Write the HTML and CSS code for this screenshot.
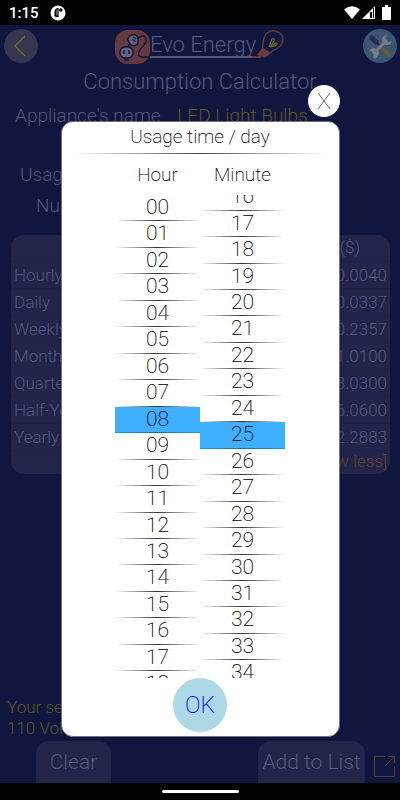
FILE: index.html
```html
<!DOCTYPE html>
<html lang="en">
<head>
	<meta charset="utf-8">
	<title>Evo Energy</title>
	<meta name="viewport" content="width=device-width, initial-scale=1">
	<link rel="stylesheet" href="styles.css">
</head>
<body>
	<div class="status">
		<span class="clock">1:15</span>
		<svg width="16" height="16" viewBox="0 0 16 16">
			<circle cx="8" cy="8" r="7.5" fill="#fff"/>
			<path d="M8.6 3H7.5Q4.5 3.5 4.5 7v3.5Q5 12 7 12h1.6z" fill="#000"/>
			<path d="M7 4.5v6" stroke="#fff" stroke-width=".7"/>
			<circle cx="10.8" cy="5" r="1.7" fill="#000"/>
		</svg>
		<svg class="signals" width="48" height="16" viewBox="0 0 48 16">
			<path d="M0 4.5Q8-2 16 4.5L8 14z" fill="#fff"/>
			<path d="M31 1v13H18z" fill="#fff"/>
			<path d="M26 7h2v6h-2zM29 3h1v10h-1z" fill="#000"/>
			<path d="M38 2h3V0h3v2h3v13h-9z" fill="#fff"/>
		</svg>
	</div>

	<main class="app">
		<header class="header">
			<button class="round back" aria-label="Back">
				<svg width="34" height="34" viewBox="0 0 34 34"><path d="M21 7L11 17l10 10" fill="none" stroke="#6b6729" stroke-width="1.5"/></svg>
			</button>
			<div class="logo">
				<svg width="35" height="36" viewBox="0 0 35 36">
					<rect x="0" y="1" width="35" height="34" rx="13" fill="#64393f"/>
					<g fill="#65647b" stroke="#11163e" stroke-width="1.5">
						<path d="M13 11q0-4 4-5 5-1 6 3 1 6-2 7-3 2-6-1z"/>
						<rect x="5" y="18" width="13" height="11" rx="5"/>
					</g>
					<path d="M17 10l4 3M18 8l3 2M9 21v4M14 21v4M10 29v2h4M13 17l3-2M23 10c6-7 11 0 6 6-5 5-9 12-1 12h7" fill="none" stroke="#11163e" stroke-width="1.4"/>
				</svg>
				<span class="brand">Evo Energy</span>
				<svg class="bulb" width="34" height="32" viewBox="0 0 34 32" fill="none">
					<path d="M11 20C10 8 15 1 22 2c10 1 12 11 4 17-3 2-6 2-8 5z" stroke="#64393f" stroke-width="1.5"/>
					<path d="M10 19l8 6-5 4-8-3z" fill="#64393f"/>
					<path d="M0 28h9" stroke="#64393f" stroke-width="2"/>
					<path d="M17 18l3-8q3-1 2 2l-4 6 6-4q3 0-1 3l-5 1" stroke="#68642e" stroke-width="1.3"/>
				</svg>
			</div>
			<button class="round tools" aria-label="Settings">
				<svg width="34" height="34" viewBox="0 0 34 34" fill="none">
					<path d="M8 8l10 10" stroke="#242b4c" stroke-width="2"/>
					<path d="M9 9l4 4" stroke="#242b4c" stroke-width="5" stroke-linecap="round"/>
					<path d="M20 20l6 6" stroke="#6a573f" stroke-width="4" stroke-linecap="round"/>
					<path d="M10 25L24 11" stroke="#777b8c" stroke-width="3"/>
					<path d="M24 6a5 5 0 1 0 5 6l-4 1-3-3zM6 23a5 5 0 1 1 4 6l1-4-3-3z" fill="#777b8c"/>
				</svg>
			</button>
		</header>
		<h1 class="title">Consumption Calculator</h1>
		<div class="fields">
			<p class="appliance">Appliance's name <span class="value">LED Light Bulbs</span></p>
			<p class="usage">Usage time</p>
			<p class="number">Number</p>
		</div>

		<div class="card">
			<table class="costs">
				<thead>
					<tr><th></th><th>($)</th></tr>
				</thead>
				<tbody>
					<tr><td>Hourly</td><td>0.0040</td></tr>
					<tr><td>Daily</td><td>0.0337</td></tr>
					<tr><td>Weekly</td><td>0.2357</td></tr>
					<tr><td>Monthly</td><td>1.0100</td></tr>
					<tr><td>Quarterly</td><td>3.0300</td></tr>
					<tr><td>Half-Yearly</td><td>6.0600</td></tr>
					<tr><td>Yearly</td><td>12.2883</td></tr>
				</tbody>
			</table>
			<a class="less" href="#">[show less]</a>
		</div>

		<p class="selection">Your selection<br>110 Volt currency</p>
		<footer class="actions">
			<button class="tab clear">Clear</button>
			<button class="tab add">Add to List</button>
			<button class="export" aria-label="Export">
				<svg width="23" height="23" viewBox="0 0 23 23"><path d="M12 1.5H1.5v20h20V11M12 11l9.5-9.5M15 1.5h6.5V8" fill="none" stroke="#573c38"/></svg>
			</button>
		</footer>
	</main>
	<div class="navbar"><span class="pill"></span></div>

	<section class="dialog" role="dialog" aria-labelledby="dialog-title">
		<button class="close" aria-label="Close">
			<svg width="14" height="18" viewBox="0 0 14 18"><path d="M1 1l12 16M13 1L1 17" stroke="#666" stroke-width="1"/></svg>
		</button>
		<h2 id="dialog-title">Usage time / day</h2>
		<div class="divider"></div>
		<div class="columns">
			<h3 id="hour-label">Hour</h3>
			<h3 id="minute-label">Minute</h3>
			<div class="wheel" id="hours" role="radiogroup" aria-labelledby="hour-label"><div class="rows hours"></div></div>
			<div class="wheel" id="minutes" role="radiogroup" aria-labelledby="minute-label"><div class="rows minutes"></div></div>
		</div>
		<button class="ok">OK</button>
	</section>
	<script src="script.js"></script>
</body>
</html>
```

FILE: styles.css
```css
* {
	box-sizing: border-box;
}
body {
	margin: 0;
	min-height: 100vh;
	display: flex;
	flex-direction: column;
	position: relative;
	background: #11163e;
	color: #56587a;
	font-family: Roboto, "Liberation Sans", sans-serif;
	font-weight: 300;
}
h1, h2, h3, p {
	margin: 0;
	font-weight: 300;
}
button {
	border: none;
	padding: 0;
	font: inherit;
	color: inherit;
	background: none;
	cursor: pointer;
}
svg {
	display: block;
}

/* system bars */
.status {
	height: 25px;
	display: flex;
	align-items: center;
	gap: 11px;
	padding: 0 8px 0 9px;
	background: #000;
	color: #fff;
}
.clock {
	font-size: 15px;
	font-weight: 500;
}
.signals {
	margin-left: auto;
}
.navbar {
	height: 17px;
	display: flex;
	justify-content: center;
	align-items: center;
	background: #000;
}
.pill {
	width: 77px;
	height: 3px;
	border-radius: 2px;
	background: #fff;
}

/* main screen */
.app {
	flex: 1;
	display: flex;
	flex-direction: column;
}
.header {
	display: flex;
	justify-content: space-between;
	padding: 4px 3px 0 4px;
	height: 44px;
}
.round {
	width: 34px;
	height: 34px;
	border-radius: 50%;
}
.back {
	background: #35364f;
}
.tools {
	background: #3b5470;
}
.logo {
	display: flex;
	height: 36px;
}
.brand {
	height: 29px;
	border-bottom: 2px solid #56587a;
	font-size: 22px;
	line-height: 31px;
}
.bulb {
	margin-left: -4px;
}
.title {
	font-size: 22px;
	line-height: 26px;
	text-align: center;
}
.fields {
	display: flex;
	flex-direction: column;
	padding: 9px 15px 0;
	font-size: 19px;
	line-height: 24px;
}
.value {
	margin-left: 12px;
	color: #5c5a22;
}
.usage {
	padding: 35px 0 7px 5px;
}
.number {
	padding-left: 21px;
}
.card {
	margin: 17px 10px 0 11px;
	border-radius: 13px;
	background: #222449;
	text-align: right;
	font-size: 17px;
	line-height: 26px;
}
.costs {
	width: 100%;
	border-collapse: collapse;
}
.costs th, .costs td {
	height: 27px;
	padding: 0 3px;
	border-bottom: 1px solid #1f2145;
	font-weight: 300;
	text-align: right;
}
.costs th {
	height: 26px;
	padding-right: 30px;
	line-height: 25px;
}
.costs td:first-child {
	text-align: left;
}
.less {
	display: block;
	padding: 0 3px 2px;
	line-height: 21px;
	color: #62402f;
	text-decoration: none;
}
.selection {
	margin-top: auto;
	padding: 0 7px 2px;
	font-size: 17px;
	line-height: 21px;
	color: #5c5a22;
}
.actions {
	display: flex;
	align-items: flex-end;
	padding: 0 4px 0 36px;
}
.tab {
	height: 42px;
	border-radius: 13px 13px 0 0;
	background: #222449;
	font-size: 21px;
}
.clear {
	width: 75px;
}
.add {
	width: 107px;
	margin-left: auto;
}
.export {
	margin: 0 0 5px 8px;
}

/* time picker */
.dialog {
	position: absolute;
	top: 121px;
	bottom: 63px;
	left: 61px;
	right: 60px;
	display: flex;
	flex-direction: column;
	align-items: center;
	padding: 0 1px 4px 0;
	border: 1px solid #777;
	border-radius: 12px;
	background: #fff;
	color: #000;
	box-shadow: 0 0 2px #00005c;
}
.dialog h2, .dialog h3 {
	font-size: 19px;
	font-weight: 200;
}
.dialog h2 {
	line-height: 30px;
}
.divider {
	align-self: stretch;
	height: 1px;
	margin: 1px 10px 0;
	background: linear-gradient(90deg, transparent, #444, transparent);
}
.columns {
	flex: 1;
	min-height: 0;
	display: grid;
	grid-template-columns: 85px 85px;
	grid-template-rows: 41px 1fr;
}
.columns h3 {
	line-height: 41px;
	text-align: center;
}
.wheel {
	position: relative;
	min-height: 0;
	overflow-y: scroll;
	scrollbar-width: none;
}
.rows {
	display: grid;
	grid-auto-rows: 1fr;
}
.hours {
	height: 635px;
}
.minutes {
	height: 1587px;
}
.row {
	position: relative;
	display: flex;
	flex-direction: column;
	align-items: center;
	font-size: 21px;
	font-weight: 200;
	line-height: 25px;
	cursor: pointer;
}
.row input {
	position: absolute;
	appearance: none;
	margin: 0;
}
.row::after {
	content: "";
	width: 100%;
	height: 1px;
	margin-top: auto;
	background: linear-gradient(90deg, transparent, #333, transparent);
}
.row:has(input:checked) {
	background: #3fafff;
}
.row:has(input:checked)::after {
	background: linear-gradient(90deg, #109cf5, #1970aa, #109cf5);
}
.ok {
	width: 54px;
	height: 54px;
	border-radius: 50%;
	background: #add8e6;
	color: #00f;
	font-size: 23px;
	font-weight: 200;
}
.close {
	position: absolute;
	top: -37px;
	right: -1px;
	width: 32px;
	height: 32px;
	display: flex;
	align-items: center;
	justify-content: center;
	border-radius: 50%;
	background: #fff;
}
```

FILE: script.js
```js
function fillWheel(id, count, selected, scroll) {
	var wheel = document.getElementById(id);
	var rows = wheel.querySelector(".rows");
	for (var i = 0; i < count; i++) {
		var label = document.createElement("label");
		var input = document.createElement("input");
		label.className = "row";
		input.type = "radio";
		input.name = id;
		input.value = i;
		input.checked = i === selected;
		label.append(input, String(i).padStart(2, "0"));
		rows.appendChild(label);
	}
	wheel.scrollTop = scroll;
}

fillWheel("hours", 24, 8, 0);
fillWheel("minutes", 60, 25, 434);
```
